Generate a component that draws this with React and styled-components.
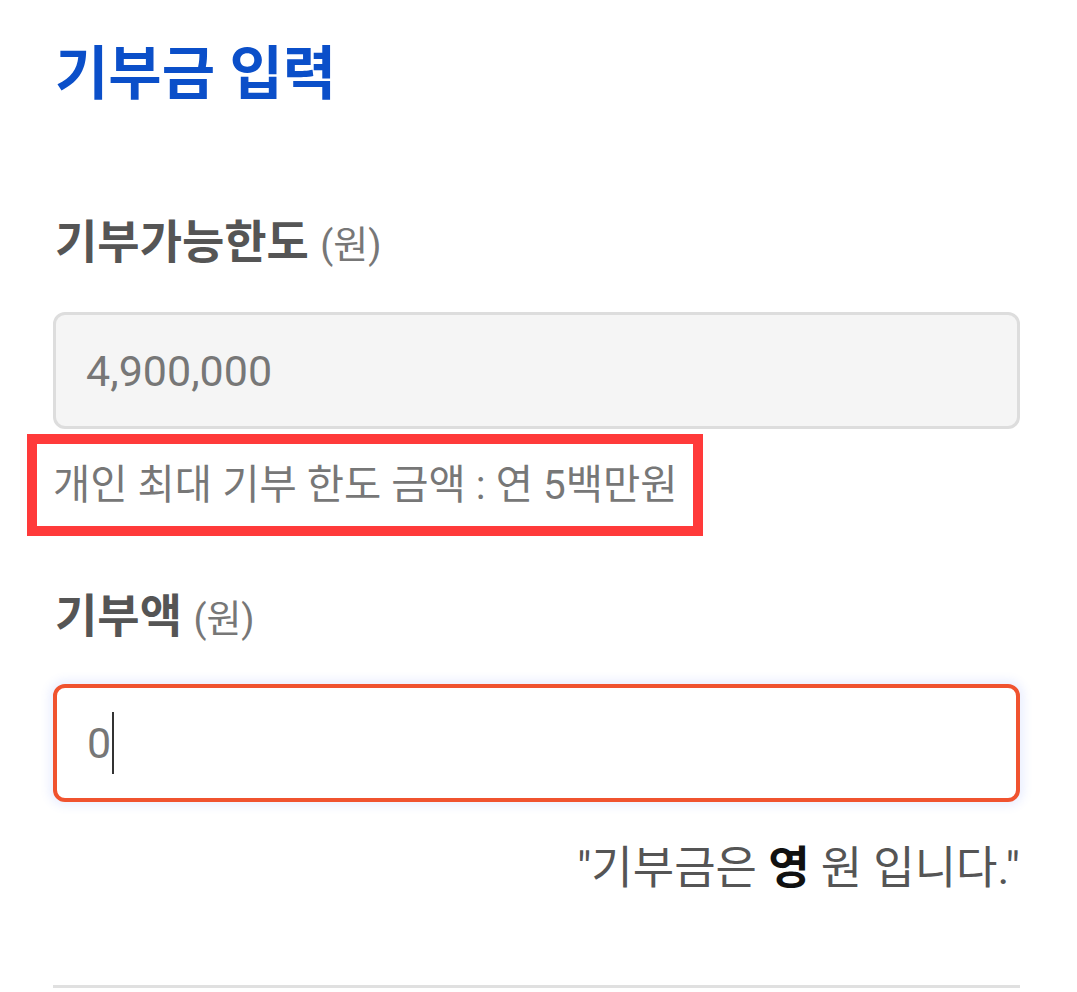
import React from "react";
import styled, { createGlobalStyle } from "styled-components";

const GlobalStyle = createGlobalStyle`
  html, body {
    margin: 0;
    padding: 0;
    background: #ffffff;
  }
  body {
    font-family: Roboto, "Noto Sans CJK KR", "Noto Sans", sans-serif;
  }
`;

function App() {
  return (
    <Wrapper>
      <GlobalStyle />
      <Title>기부금 입력</Title>

      <Label>
        기부가능한도 <Unit>(원)</Unit>
      </Label>
      <Field $disabled>4,900,000</Field>
      <Helper>개인 최대 기부 한도 금액 : 연 5백만원</Helper>

      <Label $top={50}>
        기부액 <Unit>(원)</Unit>
      </Label>
      <Field $focused>
        0<Caret />
      </Field>

      <Result>
        "기부금은 <strong>영</strong> 원 입니다."
      </Result>

      <Divider />
    </Wrapper>
  );
}

const Wrapper = styled.div`
  width: 967px;
  padding: 38px 0 0 53px;
  display: flex;
  flex-direction: column;
`;

const Title = styled.h1`
  margin: 0;
  font-size: 58px;
  line-height: 72px;
  font-weight: 700;
  color: #0b4fc9;
  padding-left: 2px;
`;

const Label = styled.div`
  margin-top: ${(p) => p.$top ?? 102}px;
  font-size: 46px;
  line-height: 60px;
  font-weight: 700;
  color: #555555;
  padding-left: 2px;
`;

const Unit = styled.span`
  font-size: 38px;
  font-weight: 400;
  color: #777777;
`;

const Field = styled.div`
  box-sizing: border-box;
  margin-top: ${(p) => (p.$focused ? 35 : 37)}px;
  height: ${(p) => (p.$focused ? 118 : 117)}px;
  display: flex;
  align-items: center;
  padding-left: 30px;
  border: ${(p) => (p.$focused ? "4px solid #f0532f" : "3px solid #dddddd")};
  border-radius: 12px;
  background: ${(p) => (p.$disabled ? "#f5f5f5" : "#ffffff")};
  box-shadow: ${(p) =>
    p.$focused ? "0 0 10px 4px rgba(90, 120, 255, 0.12)" : "none"};
  font-size: 43px;
  color: #777777;
`;

const Caret = styled.span`
  display: inline-block;
  width: 2px;
  height: 62px;
  margin-left: 1px;
  background: #333333;
`;

const Helper = styled.div`
  align-self: flex-start;
  margin: 5px 0 0 -26px;
  border: 10px solid #ff3a3a;
  padding: 0 15px 0 16px;
  line-height: 82px;
  font-size: 40.5px;
  color: #777777;
`;

const Result = styled.div`
  margin-top: 37px;
  text-align: right;
  font-size: 45px;
  line-height: 60px;
  color: #555555;

  strong {
    font-weight: 700;
    color: #111111;
  }
`;

const Divider = styled.div`
  margin-top: 86px;
  height: 3px;
  background: #e0e0e0;
`;

export default App;
